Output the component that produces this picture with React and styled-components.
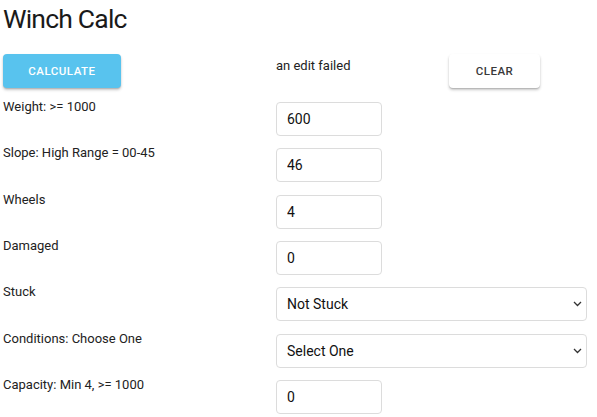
import React from 'react';
import styled, { createGlobalStyle } from 'styled-components';

const GlobalStyle = createGlobalStyle`
  body {
    margin: 0;
    background: #ffffff;
    font-family: Roboto, "Liberation Sans", sans-serif;
    color: #212121;
  }
`;

const Page = styled.div`
  padding: 0 3px;
`;

const Title = styled.h1`
  margin: 0;
  padding-top: 3px;
  font-size: 26.5px;
  font-weight: 400;
  letter-spacing: -0.8px;
  line-height: 32px;
  color: #1a1a1a;
`;

const Grid = styled.div`
  display: grid;
  grid-template-columns: 273px 1fr;
  row-gap: 12.4px;
  margin-top: 18.5px;
  align-items: start;
`;

const TopCell = styled.div`
  display: flex;
  align-items: flex-start;
  padding-bottom: 2px;
`;

const Button = styled.button`
  height: 34px;
  border: none;
  border-radius: 4px;
  font-family: Roboto, "Liberation Sans", sans-serif;
  font-size: 11.5px;
  font-weight: 500;
  letter-spacing: 0.5px;
  text-transform: uppercase;
  cursor: pointer;
  box-shadow: 0 2px 3px rgba(0, 0, 0, 0.22), 0 1px 1px rgba(0, 0, 0, 0.12);
  background: ${(p) => (p.$primary ? '#58c3ee' : '#ffffff')};
  color: ${(p) => (p.$primary ? '#ffffff' : '#3a3a3a')};
  width: ${(p) => (p.$primary ? '118px' : '91px')};
`;

const Message = styled.span`
  font-size: 13px;
  line-height: 16px;
  margin-top: 4px;
  width: 173px;
  color: #222;
`;

const Label = styled.div`
  font-size: 13px;
  line-height: 16px;
  margin-top: -3px;
  color: #222;
`;

const NumberInput = styled.input`
  box-sizing: border-box;
  width: 106px;
  height: 34px;
  border: 1px solid #dcdcdc;
  border-radius: 4px;
  padding: 0 10px;
  font-family: Roboto, "Liberation Sans", sans-serif;
  font-size: 14px;
  color: #111;
  outline: none;
`;

const SelectWrap = styled.div`
  position: relative;
  width: 311px;
`;

const Select = styled.select`
  appearance: none;
  box-sizing: border-box;
  width: 100%;
  height: 34px;
  border: 1px solid #dcdcdc;
  border-radius: 4px;
  background: #fff;
  padding: 0 10px;
  font-family: Roboto, "Liberation Sans", sans-serif;
  font-size: 14px;
  color: #111;
  outline: none;
`;

const Chevron = styled.svg`
  position: absolute;
  right: 5px;
  top: 14px;
  pointer-events: none;
`;

const fields = [
  { label: 'Weight: >= 1000', value: '600' },
  { label: 'Slope: High Range = 00-45', value: '46' },
  { label: 'Wheels', value: '4' },
  { label: 'Damaged', value: '0' },
  { label: 'Stuck', options: ['Not Stuck', 'Stuck'] },
  { label: 'Conditions: Choose One', options: ['Select One', 'Dry', 'Wet', 'Mud'] },
  { label: 'Capacity: Min 4, >= 1000', value: '0' },
];

const App = () => (
  <Page>
    <GlobalStyle />
    <Title>Winch Calc</Title>
    <Grid>
      <TopCell>
        <Button $primary>Calculate</Button>
      </TopCell>
      <TopCell>
        <Message>an edit failed</Message>
        <Button>Clear</Button>
      </TopCell>
      {fields.map((f) => (
        <React.Fragment key={f.label}>
          <Label>{f.label}</Label>
          {f.options ? (
            <SelectWrap>
              <Select defaultValue={f.options[0]}>
                {f.options.map((o) => (
                  <option key={o}>{o}</option>
                ))}
              </Select>
              <Chevron width="9" height="6" viewBox="0 0 9 6">
                <path d="M1 1l3.5 3.5L8 1" fill="none" stroke="#333" strokeWidth="1.3" />
              </Chevron>
            </SelectWrap>
          ) : (
            <NumberInput type="text" defaultValue={f.value} />
          )}
        </React.Fragment>
      ))}
    </Grid>
  </Page>
);

export default App;
